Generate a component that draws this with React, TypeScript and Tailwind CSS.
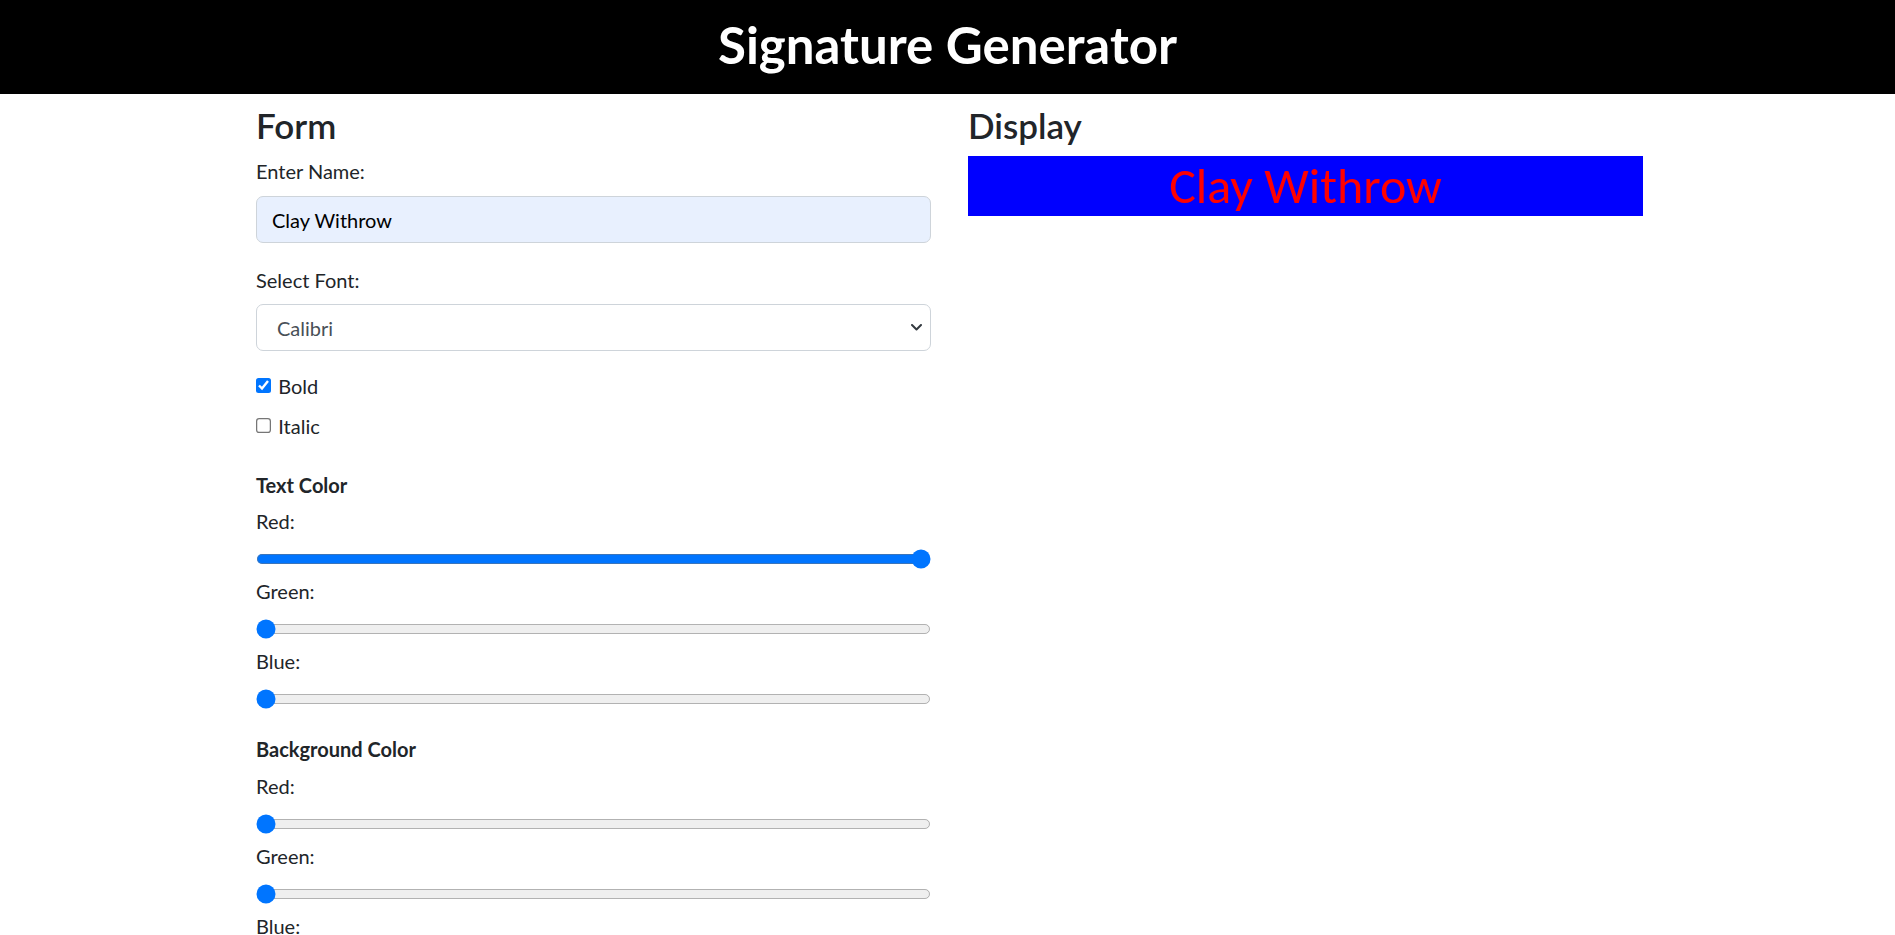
import React, { useState } from 'react';

interface Rgb {
  r: number;
  g: number;
  b: number;
}

const fonts = ['Calibri', 'Arial', 'Times New Roman', 'Verdana', 'Georgia', 'Courier New'];

const ColorSlider: React.FC<{ label: string; value: number; onChange: (v: number) => void }> = ({
  label,
  value,
  onChange,
}) => (
  <>
    <label className="block h-[30px] leading-[30px]">{label}</label>
    <div className="flex h-[40px] items-center pt-[5px]">
      <input
        type="range"
        min={0}
        max={255}
        value={value}
        onChange={(e) => onChange(Number(e.target.value))}
        className="w-[540px] cursor-pointer accent-[#0075ff] [zoom:1.25]"
      />
    </div>
  </>
);

const App: React.FC = () => {
  const [name, setName] = useState('Clay Withrow');
  const [font, setFont] = useState('Calibri');
  const [bold, setBold] = useState(true);
  const [italic, setItalic] = useState(false);
  const [text, setText] = useState<Rgb>({ r: 255, g: 0, b: 0 });
  const [bg, setBg] = useState<Rgb>({ r: 0, g: 0, b: 255 });

  return (
    <div className="min-h-screen bg-white font-[Lato,'Liberation_Sans',sans-serif] text-[20px] text-[#212529]">
      <header className="flex h-[94px] items-center justify-center bg-black pb-[4px]">
        <h1 className="text-[51px] font-bold leading-[60px] text-white">Signature Generator</h1>
      </header>

      <main className="ml-[256px] mt-[10px] flex gap-[37px]">
        {/* form */}
        <section className="w-[675px]">
          <h3 className="mb-[10px] text-[35px] font-semibold leading-[42px]">Form</h3>

          <label className="mb-[10px] block h-[30px] leading-[30px]">Enter Name:</label>
          <input
            type="text"
            value={name}
            onChange={(e) => setName(e.target.value)}
            className="block h-[47px] w-full rounded-[7px] border border-[#ced4da] bg-[#e8f0fe] px-[15px] text-[20px] text-black outline-none"
          />

          <label className="mb-[9px] mt-[22px] block h-[30px] leading-[30px]">Select Font:</label>
          <div className="relative">
            <select
              value={font}
              onChange={(e) => setFont(e.target.value)}
              className="block h-[47px] w-full appearance-none rounded-[7px] border border-[#ced4da] bg-white pl-[20px] text-[20px] text-[#495057] outline-none"
            >
              {fonts.map((f) => (
                <option key={f} value={f}>
                  {f}
                </option>
              ))}
            </select>
            <svg
              className="pointer-events-none absolute right-[9px] top-[20px]"
              width="11"
              height="7"
              viewBox="0 0 11 7"
              fill="none"
              stroke="#343a40"
              strokeWidth="2"
              strokeLinecap="round"
              strokeLinejoin="round"
            >
              <path d="M1 1l4.5 4.5L10 1" />
            </svg>
          </div>

          <label className="mt-[20px] flex h-[30px] items-center gap-[6px]">
            <input
              type="checkbox"
              checked={bold}
              onChange={(e) => setBold(e.target.checked)}
              className="accent-[#0075ff] [zoom:1.25]"
            />
            Bold
          </label>
          <label className="mt-[10px] flex h-[30px] items-center gap-[6px]">
            <input
              type="checkbox"
              checked={italic}
              onChange={(e) => setItalic(e.target.checked)}
              className="accent-[#0075ff] [zoom:1.25]"
            />
            Italic
          </label>

          <h6 className="mb-[6px] mt-[29px] h-[30px] font-bold leading-[30px]">Text Color</h6>
          <ColorSlider label="Red:" value={text.r} onChange={(r) => setText({ ...text, r })} />
          <ColorSlider label="Green:" value={text.g} onChange={(g) => setText({ ...text, g })} />
          <ColorSlider label="Blue:" value={text.b} onChange={(b) => setText({ ...text, b })} />

          <h6 className="mb-[7px] mt-[18px] h-[30px] font-bold leading-[30px]">Background Color</h6>
          <ColorSlider label="Red:" value={bg.r} onChange={(r) => setBg({ ...bg, r })} />
          <ColorSlider label="Green:" value={bg.g} onChange={(g) => setBg({ ...bg, g })} />
          <ColorSlider label="Blue:" value={bg.b} onChange={(b) => setBg({ ...bg, b })} />
        </section>

        {/* preview */}
        <section className="w-[675px]">
          <h3 className="mb-[10px] text-[35px] font-semibold leading-[42px]">Display</h3>
          <div
            className="flex h-[60px] items-center justify-center text-[50px] leading-none"
            style={{
              backgroundColor: `rgb(${bg.r}, ${bg.g}, ${bg.b})`,
              color: `rgb(${text.r}, ${text.g}, ${text.b})`,
              fontFamily: `${font}, Lato, sans-serif`,
              fontStyle: italic ? 'italic' : 'normal',
            }}
          >
            {name}
          </div>
        </section>
      </main>
    </div>
  );
};

export default App;
